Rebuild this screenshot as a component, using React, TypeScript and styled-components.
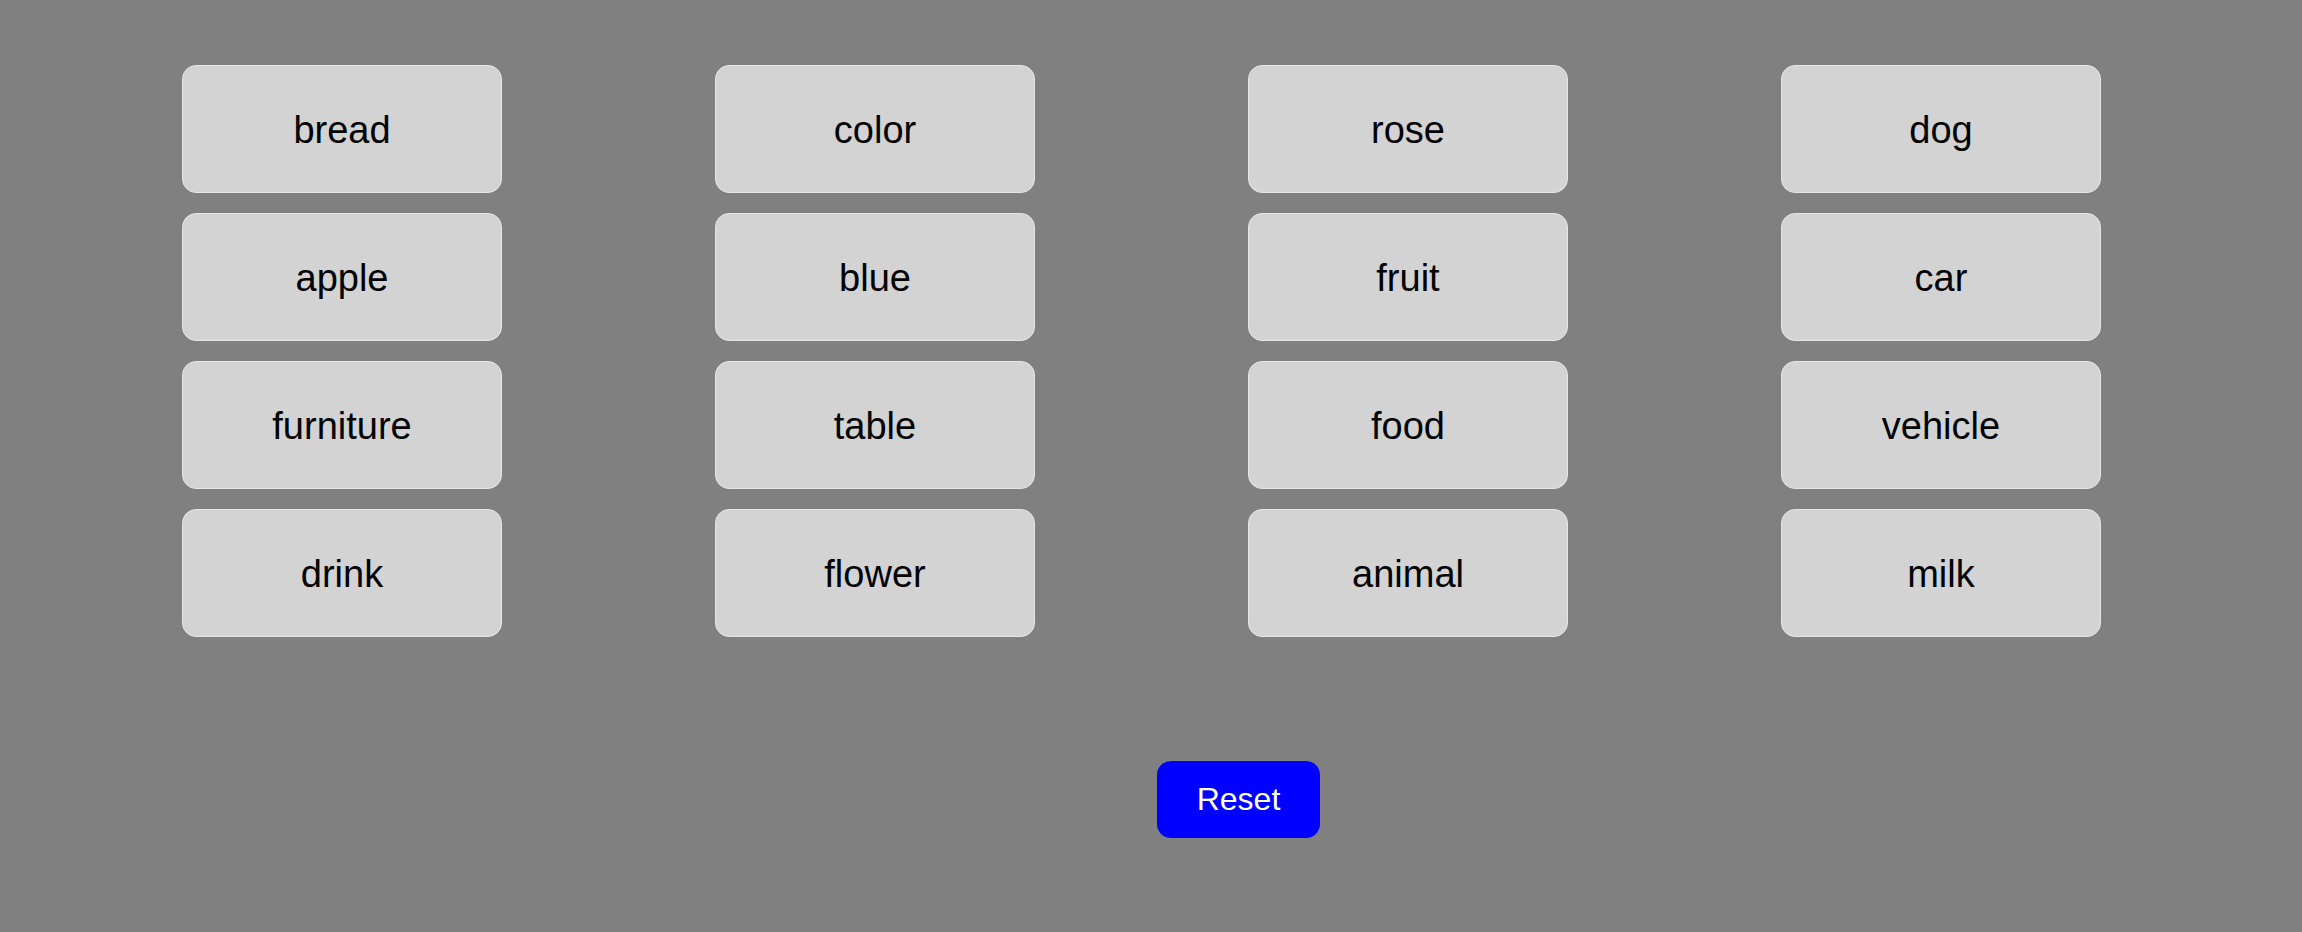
import React from "react";
import styled, { createGlobalStyle } from "styled-components";

const words = [
  ["bread", "color", "rose", "dog"],
  ["apple", "blue", "fruit", "car"],
  ["furniture", "table", "food", "vehicle"],
  ["drink", "flower", "animal", "milk"],
];

const App: React.FC = () => {
  return (
    <Page>
      <GlobalStyle />
      <Board>
        {words.flat().map((w) => (
          <Card key={w}>{w}</Card>
        ))}
      </Board>
      <Footer>
        <ResetButton>Reset</ResetButton>
      </Footer>
    </Page>
  );
};

export default App;

const GlobalStyle = createGlobalStyle`
  html, body {
    margin: 0;
    padding: 0;
    background: #808080;
  }
  body {
    font-family: "Liberation Sans", Arial, sans-serif;
  }
`;

const Page = styled.div`
  width: 2302px;
  min-height: 932px;
  background: #808080;
  padding-top: 65px;
  box-sizing: border-box;
`;

const Board = styled.div`
  display: grid;
  grid-template-columns: repeat(4, 320px);
  grid-auto-rows: 128px;
  column-gap: 213px;
  row-gap: 20px;
  padding-left: 182px;
`;

const Card = styled.div`
  display: flex;
  align-items: center;
  justify-content: center;
  box-sizing: border-box;
  padding-top: 2px;
  background: #d3d3d3;
  border: 1px solid #e6e6e6;
  border-radius: 14px;
  color: #000;
  font-size: 38px;
  cursor: pointer;
`;

const Footer = styled.div`
  display: flex;
  padding-left: 1157px;
  margin-top: 124px;
`;

const ResetButton = styled.button`
  width: 163px;
  height: 77px;
  background: #0000ff;
  color: #fff;
  border: none;
  border-radius: 14px;
  font-family: "Liberation Sans", Arial, sans-serif;
  font-size: 32px;
  cursor: pointer;
`;
